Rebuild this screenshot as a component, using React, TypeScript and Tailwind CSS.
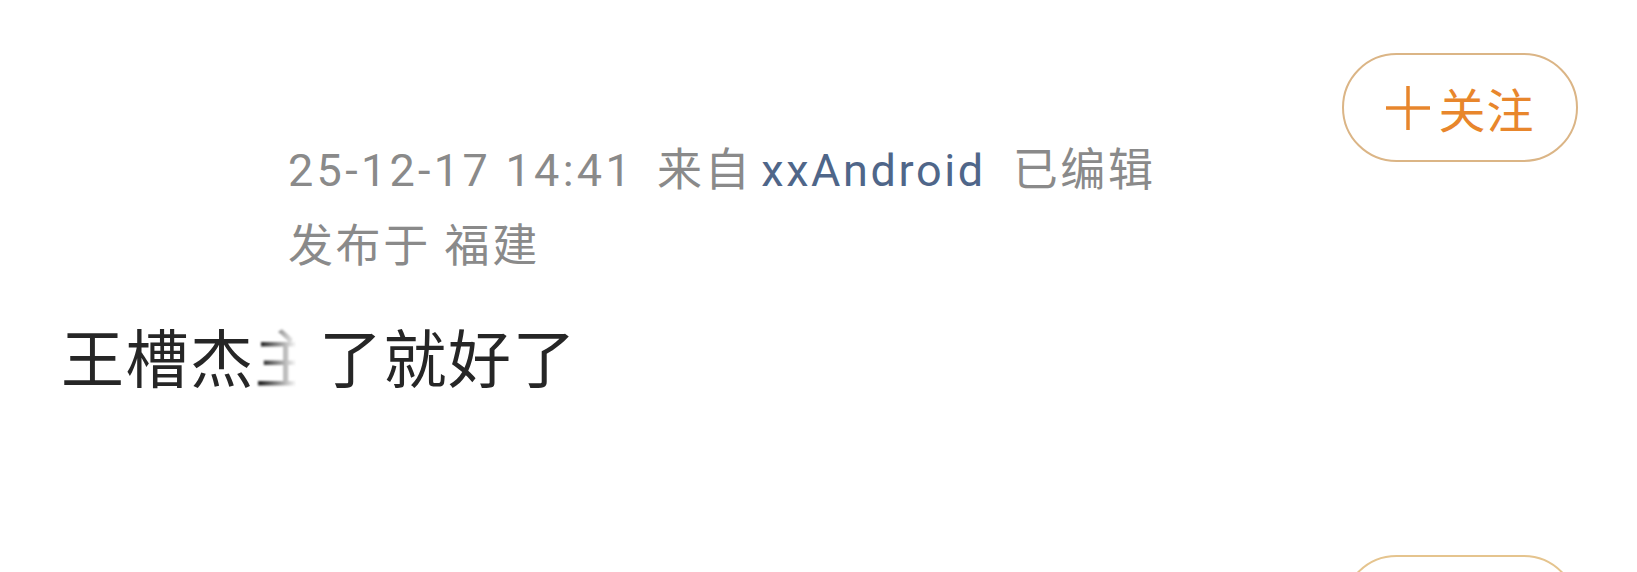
import React from 'react';

const FollowButton = () => (
  <button className="flex h-[109px] w-[236px] items-center justify-center gap-[9px] rounded-full border-2 border-[#dbb586] bg-white text-[#e8862c]">
    <svg width="44" height="46" viewBox="0 0 44 46" fill="none" stroke="currentColor" strokeWidth="3.5">
      <path d="M0 23H44M22 1V45" />
    </svg>
    <span className="text-[47px] leading-none tracking-[1px] [font-family:'Noto_Sans_CJK_SC',sans-serif]">关注</span>
  </button>
);

const App = () => {
  return (
    <div className="h-[572px] w-[1637px] overflow-hidden bg-white pl-[61px] pr-[59px] [font-family:Roboto,'Noto_Sans_CJK_SC',sans-serif]">
      {/* header: meta + follow */}
      <div className="flex items-start justify-between pt-[53px]">
        <div className="pl-[227px] pt-[79px] text-[45px] tracking-[2.6px] text-[#8a8a8a]">
          <div className="whitespace-nowrap leading-[77px]">
            <span className="tracking-[3.3px]">25-12-17 14:41</span>
            <span className="ml-[23px]">来自</span>
            <span className="ml-[9px] text-[#4f6689]">xxAndroid</span>
            <span className="ml-[27px]">已编辑</span>
          </div>
          <div className="whitespace-nowrap leading-[75px]">发布于 福建</div>
        </div>
        <FollowButton />
      </div>

      {/* post body */}
      <p className="mt-[31px] whitespace-nowrap text-[63px] leading-[80px] tracking-[1.5px] text-[#262626] [font-family:'Noto_Sans_CJK_SC',sans-serif]">
        王槽杰
        <span className="blur-[1px] [mask-image:linear-gradient(to_right,black_10%,transparent_65%)]">主</span>
        了就好了
      </p>

      {/* next post */}
      <div className="mt-[160px] flex justify-end">
        <div className="h-[109px] w-[236px] rounded-full border-2 border-[#e5c48e]" />
      </div>
    </div>
  );
};

export default App;
